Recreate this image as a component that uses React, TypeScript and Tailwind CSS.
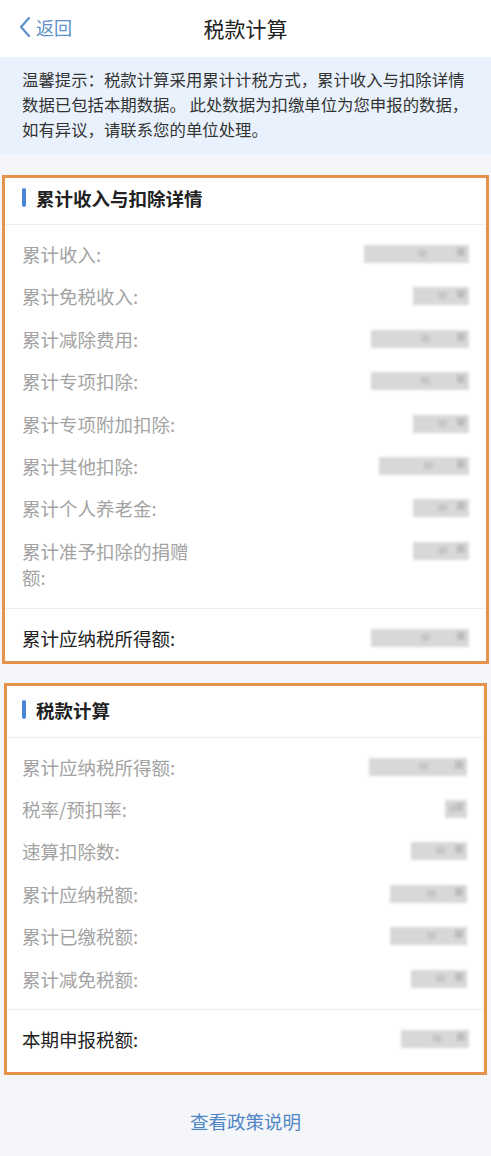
import React from "react";

const font = { fontFamily: '"Noto Sans CJK SC", "Noto Sans", sans-serif' };

function Blur({ w }: { w: number }) {
  return (
    <div className="flex h-[22px] items-center justify-end" style={{ width: w }}>
      <div className="relative h-[18px] w-full bg-[#d8d8d8] blur-[1.5px]">
        <div className="absolute right-[4px] top-[3px] h-[8px] w-[8px] bg-[#bdbdbd]" />
        <div className="absolute right-[40%] top-[5px] h-[7px] w-[9px] bg-[#c6c6c6]" />
      </div>
    </div>
  );
}

function Row({ label, w, lines, pl }: { label: React.ReactNode; w: number; lines?: boolean; pl: string }) {
  return (
    <div className={"flex items-start justify-between py-2 pr-[17px] " + pl}>
      <div className={"text-[18.5px] leading-[26.4px] text-[#a3a3a3] " + (lines ? "w-[176px]" : "")}>{label}</div>
      <div className="pt-[2px]">
        <Blur w={w} />
      </div>
    </div>
  );
}

function Header({ title, cls }: { title: string; cls: string }) {
  return (
    <div className={"flex items-start border-b border-[#eeeeee] " + cls}>
      <div className="mt-[1px] h-[19px] w-[4px] rounded-full bg-[#4a86d8]" />
      <div className="ml-[10px] text-[18.5px] font-bold leading-[22px] text-[#222]">{title}</div>
    </div>
  );
}

export default function App() {
  return (
    <div style={font} className="min-h-[1156px] w-[491px] bg-[#f5f6f9]">
      <div className="relative flex h-[57px] items-center justify-center bg-white">
        <div className="absolute left-[18px] top-[15px] flex items-center text-[#5d8fc9]">
          <svg width="14" height="24" viewBox="0 0 14 24" fill="none">
            <path d="M11 3 L3 12 L11 21" stroke="#5d8fc9" strokeWidth="2.2" strokeLinecap="round" strokeLinejoin="round" />
          </svg>
          <span className="ml-[4px] text-[18px] leading-[24px]">返回</span>
        </div>
        <div className="text-[21px] text-[#222]">税款计算</div>
      </div>
      <div className="bg-[#e9f2fc] pl-[22px] pr-[17px] pb-[12px] pt-[10px] text-[16.4px] leading-[25px] text-[#333]">
        温馨提示：税款计算采用累计计税方式，累计收入与扣除详情数据已包括本期数据。 此处数据为扣缴单位为您申报的数据，如有异议，请联系您的单位处理。
      </div>

      <div className="mx-[2px] mt-[21px] border-[3px] border-[#e7924c] bg-white">
        <Header title="累计收入与扣除详情" cls="h-[47px] pt-[9px] pl-[17px]" />
        <div className="pt-2 pb-[9px]">
          <Row pl="pl-[17px]" label="累计收入:" w={105} />
          <Row pl="pl-[17px]" label="累计免税收入:" w={56} />
          <Row pl="pl-[17px]" label="累计减除费用:" w={98} />
          <Row pl="pl-[17px]" label="累计专项扣除:" w={98} />
          <Row pl="pl-[17px]" label="累计专项附加扣除:" w={56} />
          <Row pl="pl-[17px]" label="累计其他扣除:" w={90} />
          <Row pl="pl-[17px]" label="累计个人养老金:" w={56} />
          <Row pl="pl-[17px]" label="累计准予扣除的捐赠额:" w={56} lines />
        </div>
        <div className="flex items-center justify-between border-t border-[#eeeeee] pl-[17px] pr-[17px] pt-4 pb-[10px]">
          <div className="text-[18.5px] leading-[26px] text-[#222]">累计应纳税所得额:</div>
          <Blur w={98} />
        </div>
      </div>

      <div className="mx-[4px] mt-[19px] border-[3px] border-[#e7924c] bg-white">
        <Header title="税款计算" cls="h-[52px] pt-[13px] pl-[15px]" />
        <div className="pt-[8px] pb-[9px]">
          <Row pl="pl-[15px]" label="累计应纳税所得额:" w={98} />
          <Row pl="pl-[15px]" label="税率/预扣率:" w={22} />
          <Row pl="pl-[15px]" label="速算扣除数:" w={56} />
          <Row pl="pl-[15px]" label="累计应纳税额:" w={77} />
          <Row pl="pl-[15px]" label="累计已缴税额:" w={77} />
          <Row pl="pl-[15px]" label="累计减免税额:" w={56} />
        </div>
        <div className="flex items-center justify-between border-t border-[#eeeeee] pl-[15px] pr-[15px] pt-4 pb-[20px]">
          <div className="text-[18.5px] leading-[26px] text-[#222]">本期申报税额:</div>
          <Blur w={68} />
        </div>
      </div>

      <div className="flex justify-center pt-[34px] pb-[20px]">
        <span className="text-[18.5px] leading-[24px] text-[#4f86c6]">查看政策说明</span>
      </div>
    </div>
  );
}
